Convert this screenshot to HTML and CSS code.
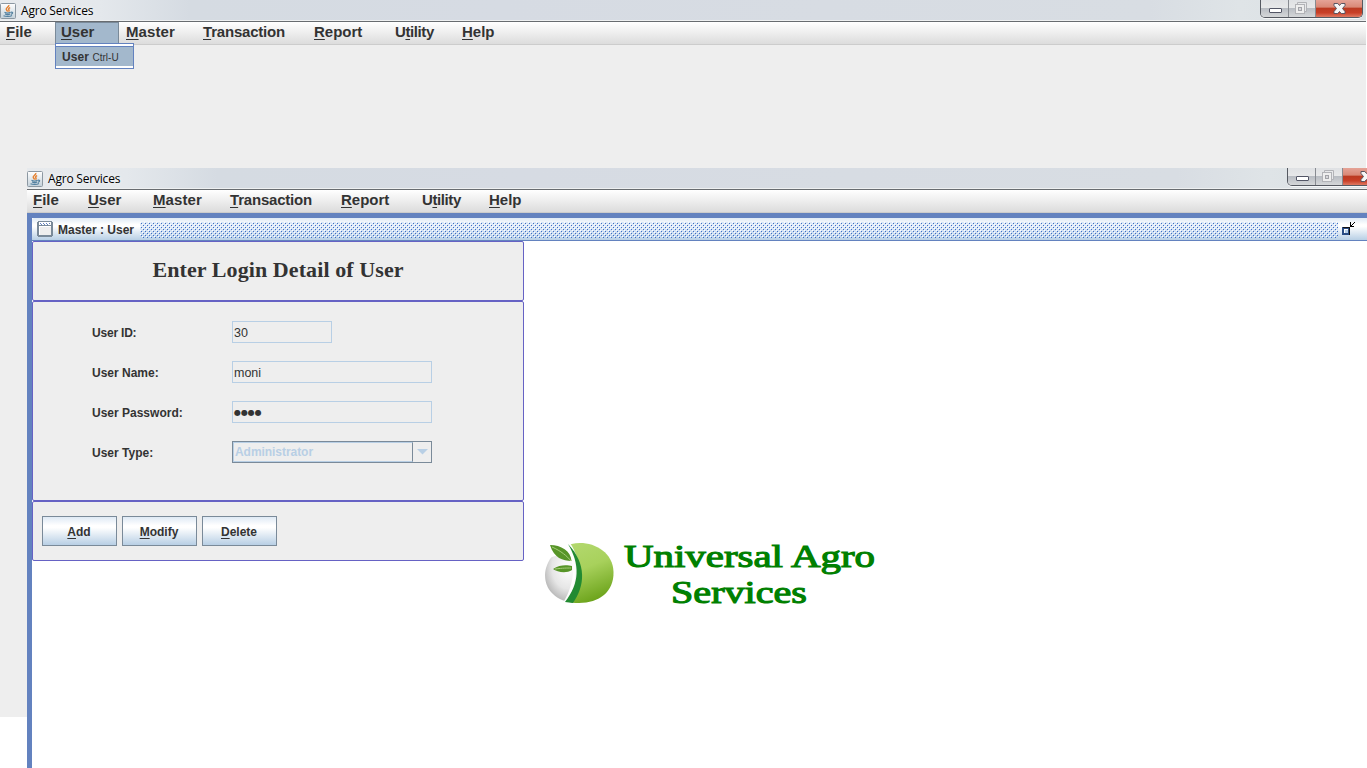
FILE: index.html
```html
<!DOCTYPE html>
<html lang="en">
<head>
<meta charset="utf-8">
<title>Agro Services</title>
<link rel="stylesheet" href="styles.css">
</head>
<body>
<svg class="defs" width="0" height="0">
  <defs>
    <linearGradient id="javaBg" x2="0" y2="1"><stop offset="0" stop-color="#fff"/><stop offset="1" stop-color="#c4d1da"/></linearGradient>
    <linearGradient id="leaf" x2=".3" y2="1"><stop offset="0" stop-color="#b5da72"/><stop offset=".5" stop-color="#a8d15c"/><stop offset="1" stop-color="#6da41c"/></linearGradient>
    <radialGradient id="pearl" cx=".7" cy=".3" r=".8"><stop offset="0" stop-color="#fff"/><stop offset=".5" stop-color="#e6e6e6"/><stop offset="1" stop-color="#999"/></radialGradient>
    <symbol id="java" viewBox="0 0 16 16">
      <rect x=".5" y=".5" width="15" height="15" rx="1" fill="url(#javaBg)" stroke="#8c98a2"/>
      <path d="M8.800 2c.6 1.800-3 2.600-2.500 4.300.2.900 1.200 1.400 1 2.400M10.200 4.600C8.800 5.200 8.300 6 8.900 6.900c.4.700.2 1.200-.4 1.700" fill="none" stroke="#e58130" stroke-width="1.500"/>
      <path d="M4.500 9.300c1.500.8 4.500.8 6.200 0M5 11c1.500.7 3.900.7 5.300 0M3.500 12.700c2.300 1.100 6.500 1 8.500-.2M11 9.300c2.200-.6 2.200 1.400 0 2" fill="none" stroke="#53809f" stroke-width="1.200"/>
    </symbol>
    <symbol id="min" viewBox="0 0 13 5"><rect x=".5" y=".5" width="12" height="4" rx=".5" fill="#fff" stroke="#535666"/></symbol>
    <symbol id="max" viewBox="0 0 12 12"><path d="M2.500 2.500v-2h9v9h-2" fill="#e7e8ea" stroke="#b2b3b7"/><rect x=".5" y="2.500" width="9" height="9" fill="#eee" stroke="#b2b3b7"/><rect x="3.500" y="5.500" width="3" height="3" fill="#d8d8dc" stroke="#a2a3a8"/></symbol>
    <symbol id="close" viewBox="0 0 13 11"><path d="M1 .5h3.800l1.700 2 1.700-2H12v2L9.500 5.500l2.500 3v2H8.200l-1.700-2-1.700 2H1v-2l2.500-3L1 2.500z" fill="#f6f6f6" stroke="#5a5562"/></symbol>
  </defs>
</svg>

<main class="stage">
  <section class="window window-back">
    <header class="titlebar">
      <svg class="java" width="16" height="16"><use href="#java"/></svg>
      <span class="caption">Agro Services</span>
      <div class="controls">
        <span class="ctl ctl-min"><svg width="13" height="5"><use href="#min"/></svg></span><span class="ctl ctl-max"><svg width="12" height="12"><use href="#max"/></svg></span><span class="ctl ctl-close"><svg width="13" height="11"><use href="#close"/></svg></span>
      </div>
    </header>
    <nav class="menubar">
      <span class="menu"><u>F</u>ile</span>
      <span class="menu menu-open"><u>U</u>ser
        <span class="dropdown"><span class="dropdown-item">User <small>Ctrl-U</small></span></span>
      </span>
      <span class="menu menu-master"><u>M</u>aster</span>
      <span class="menu menu-long"><u>T</u>ransaction</span>
      <span class="menu"><u>R</u>eport</span>
      <span class="menu menu-utility">U<u>t</u>ility</span>
      <span class="menu"><u>H</u>elp</span>
    </nav>
  </section>

  <section class="window window-front">
    <header class="titlebar">
      <svg class="java" width="16" height="16"><use href="#java"/></svg>
      <span class="caption">Agro Services</span>
      <div class="controls">
        <span class="ctl ctl-min"><svg width="13" height="5"><use href="#min"/></svg></span><span class="ctl ctl-max"><svg width="12" height="12"><use href="#max"/></svg></span><span class="ctl ctl-close"><svg width="13" height="11"><use href="#close"/></svg></span>
      </div>
    </header>
    <nav class="menubar">
      <span class="menu"><u>F</u>ile</span>
      <span class="menu"><u>U</u>ser</span>
      <span class="menu menu-master"><u>M</u>aster</span>
      <span class="menu menu-long"><u>T</u>ransaction</span>
      <span class="menu"><u>R</u>eport</span>
      <span class="menu menu-utility">U<u>t</u>ility</span>
      <span class="menu"><u>H</u>elp</span>
    </nav>

    <div class="frame">
      <div class="frame-title">
        <svg class="frame-icon" width="16" height="16" viewBox="0 0 16 16" shape-rendering="crispEdges"><path d="M1 0h14v1h1v14h-1v1H1v-1H0V1h1z" fill="#7a8a99"/><path d="M2 1h12v3H2z" fill="#fff"/><path d="M2 5h12v9H2z" fill="#fff"/><path d="M3 6h11v8H3z" fill="#eee"/><path d="M3 2h1v1H3zM6 2h1v1H6zM9 2h1v1H9zM12 2h1v1h-1zM4 3h1v1H4zM7 3h1v1H7zM10 3h1v1h-1z" fill="#6382bf"/></svg>
        <span class="frame-name">Master : User</span>
        <svg class="bumps" width="1198" height="16" shape-rendering="crispEdges"><defs><pattern id="dots" width="4" height="4" patternUnits="userSpaceOnUse"><path d="M0 0h4v4H0z" fill="#b8d0f0" opacity=".45"/><path d="M1 1h1v1H1zM3 3h1v1H3z" fill="#3f6fc4"/><path d="M0 0h1v1H0zM2 2h1v1H2z" fill="#fff"/></pattern></defs><rect width="1198" height="16" fill="url(#dots)"/></svg>
        <svg class="restore" width="16" height="16" viewBox="0 0 16 16" shape-rendering="crispEdges"><path d="M2 6h8v8H2z" fill="#294b83"/><path d="M3 6h7v8H9V7H3z" fill="#111"/><path d="M4 8h4v4H4z" fill="#fff"/><path d="M5 9h3v3H5z" fill="#b8cfe5"/><path d="M10 1h1v3h1V3h1V2h1V1h1v1h-1v1h-1v1h-1v1h2v1h-4z" fill="#000"/></svg>
      </div>
      <div class="desktop">
        <form class="form">
          <div class="panel panel-head"><h1>Enter Login Detail of User</h1></div>
          <div class="panel panel-fields">
            <span class="label label-tight">User ID:</span><span class="field field-short">30</span>
            <span class="label">User Name:</span><span class="field">moni</span>
            <span class="label">User Password:</span><span class="field"><span class="secret">●●●●</span></span>
            <span class="label">User Type:</span><span class="combo"><span class="combo-value">Administrator</span><span class="combo-arrow"><svg width="11" height="6" viewBox="0 0 11 6"><path d="M0 0h11L5.500 5.500z" fill="#b8cfe5"/></svg></span></span>
          </div>
          <div class="panel panel-actions">
            <button type="button"><u>A</u>dd</button>
            <button type="button"><u>M</u>odify</button>
            <button type="button"><u>D</u>elete</button>
          </div>
        </form>
        <svg class="brand" width="350" height="80" viewBox="0 0 350 80">
          <clipPath id="ball"><path d="M40 4C56 4 73 14 73.500 33C74 53 59 64 39 64C20 64 5 54 5 36C5 24 16 4 40 4z"/></clipPath>
          <g clip-path="url(#ball)"><path d="M0 12h40v54H0z" fill="url(#pearl)"/><path d="M27 0h50v66H29C45 43 41 17 27 0z" fill="url(#leaf)"/></g>
          <path d="M6 21C12 17 20 15 32 17L26 0H6z" fill="#fff"/>
          <path d="M26 2C39 17 39 45 27 63L23 64C36 43 36 22 24 4z" fill="#fff" opacity=".9"/>
          <path d="M28 5C47 25 45 47 33 64l-8-1C40 44 40 25 28 5z" fill="#228a32"/>
          <path d="M10 6C21 6 31 12 31.500 22C23 22 14 19 10 6zM13 30C20 25 28 26 32 27V31C26 35 17 33 13 30z" fill="#579528"/>
          <path d="M12 8C21 12 27 17 31 22M15 30C23 29 27 29 31 29" fill="none" stroke="#a6ce79"/>
          <text x="84" y="28" textLength="251" lengthAdjust="spacingAndGlyphs">Universal Agro</text>
          <text x="131" y="64" textLength="136" lengthAdjust="spacingAndGlyphs">Services</text>
        </svg>
      </div>
    </div>
  </section>
</main>
</body>
</html>
```
FILE: styles.css
```css
* { box-sizing: border-box; }
body { margin: 0; background: #fff; color: #333; font-family: "Liberation Sans", Arial, sans-serif; overflow: hidden; }
.defs { position: absolute; }
.stage { position: relative; width: 1367px; height: 768px; overflow: hidden; }
.window { position: absolute; width: 1366px; }
.window-back { left: 0; top: 0; height: 717px; background: #eee; }
.window-front { left: 27px; top: 168px; height: 600px; display: flex; flex-direction: column; }
.titlebar { position: relative; display: flex; align-items: flex-start; height: 22px; padding-top: 3px; border-bottom: 1px solid #686c70; background: linear-gradient(90deg, #e7eaed 0, #e4e8ec 100px, #d5dbe2 190px, #d6dbe3 500px, #d8dde3 1150px, #dfe4e7 1240px, #d9dfe3); box-shadow: inset 0 -1px #eef0f1; }
.java { flex: none; }
.caption { margin-left: 5px; font: 12px/16px "Open Sans", sans-serif; letter-spacing: -.2px; color: #000; text-shadow: 0 0 5px #fff; }
.controls { position: absolute; left: 1260px; top: 0; display: flex; height: 18px; width: 103px; border: 1px solid #555961; border-top: 0; border-radius: 0 0 5px 5px; overflow: hidden; box-shadow: 0 1px #f5f6f7; }
.ctl { display: flex; justify-content: center; padding-top: 1px; background: linear-gradient(#dfe1e4 0, #e7e8e9 45%, #b9bdc3 50%, #d5d7d9 100%); border-right: 1px solid #888b91; }
.ctl-min { width: 28px; padding-left: 1px; }
.ctl-min svg { margin-top: 7px; }
.ctl-max { width: 27px; padding-right: 2px; }
.ctl-max svg { margin-top: 1px; }
.ctl-close { flex: 1; border: 0; background: linear-gradient(#e5a397 0, #d98876 42%, #bb3a22 48%, #c83f27 75%, #df7962 100%); }
.ctl-close svg { margin-top: 2px; }
.menubar { flex: none; display: grid; grid-template-columns: 55px 65px 77px 111px 81px 67px 80px; padding-left: 6px; height: 23px; border-bottom: 1px solid #ccc; background: linear-gradient(#fff, #dcdcdc); font-weight: bold; font-size: 15px; line-height: 20px; }
.menu { position: relative; height: 22px; white-space: nowrap; }
.menu-long { letter-spacing: -.2px; }
.menu-master { letter-spacing: .1px; }
.menu-utility { letter-spacing: -.4px; }
u { text-decoration-thickness: 1px; text-underline-offset: 2px; text-decoration-skip-ink: none; }
.menu-open { margin-left: -6px; padding-left: 5px; width: 64px; background: #a3b8cc; border: 1px solid #7a8a99; border-bottom: 0; line-height: 18px; }
.dropdown { position: absolute; left: -1px; top: 20px; width: 79px; height: 26px; border: 1px solid #6382bf; background: #fff; padding: 2px 0; }
.dropdown-item { display: block; height: 20px; padding-left: 6px; background: #a3b8cc; border-top: 1px solid #6382bf; font-size: 12px; line-height: 20px; letter-spacing: .1px; }
.dropdown-item small { font-weight: normal; font-size: 10px; letter-spacing: 0; }
.frame { flex: 1; display: flex; flex-direction: column; border: 5px solid #6382bf; border-width: 5px 0 0 5px; background: #fff; }
.frame-title { flex: none; display: flex; height: 23px; border-bottom: 1px solid #6382bf; background: linear-gradient(#dfeaf5, #fff 30%, #fff 38%, #b8cfe5); border-top-left-radius: 2px; }
.frame-icon { flex: none; margin: 3px 0 0 5px; }
.frame-name { margin-left: 5px; width: 82px; white-space: nowrap; font: bold 12px/24px "Liberation Sans", sans-serif; }
.bumps { flex: none; margin-top: 4px; }
.restore { flex: none; margin: 3px 0 0 2px; }
.desktop { position: relative; flex: 1; background: #fff; }
.form { width: 492px; display: flex; flex-direction: column; }
.panel { background: #eee; border: 1px solid #6662c4; border-radius: 2px; }
.panel-head { height: 60px; padding-top: 15px; }
.panel-head h1 { margin: 0; text-align: center; font: bold 22px/26px "Liberation Serif", serif; letter-spacing: .09px; }
.panel-fields { height: 200px; display: grid; grid-template-columns: 140px 200px; grid-auto-rows: 22px; row-gap: 18px; padding: 19px 0 0 59px; }
.label { font: bold 12px/24px "Liberation Sans", sans-serif; }
.label-tight { letter-spacing: -.2px; }
.field { height: 22px; padding-left: 1px; border: 1px solid #b8cfe5; font-size: 12.5px; line-height: 22px; }
.field-short { width: 100px; }
.secret { display: block; font: 8px/21px "DejaVu Sans", sans-serif; letter-spacing: -.1px; }
.combo { display: flex; height: 22px; border: 1px solid #7a8a99; }
.combo-value { width: 180px; padding-left: 1px; border: 1px solid #b8cfe5; border-right-color: #7a8a99; color: #b8cfe5; font: bold 12px/18px "Liberation Sans", sans-serif; letter-spacing: -.05px; }
.combo-arrow { flex: 1; display: flex; align-items: center; justify-content: center; }
.panel-actions { height: 60px; display: flex; gap: 5px; padding: 14px 9px; }
button { width: 75px; height: 30px; padding: 1px 1px 0 0; border: 1px solid #7a8a99; background: linear-gradient(#dfeaf5, #fff 30%, #fff 38%, #b8cfe5); color: #333; font: bold 12px/29px "Liberation Sans", sans-serif; }
.brand { position: absolute; left: 508px; top: 298px; overflow: visible; }
.brand text { font: 31px "Liberation Serif", serif; fill: #008000; stroke: #008000; stroke-width: 1.1px; }
```
